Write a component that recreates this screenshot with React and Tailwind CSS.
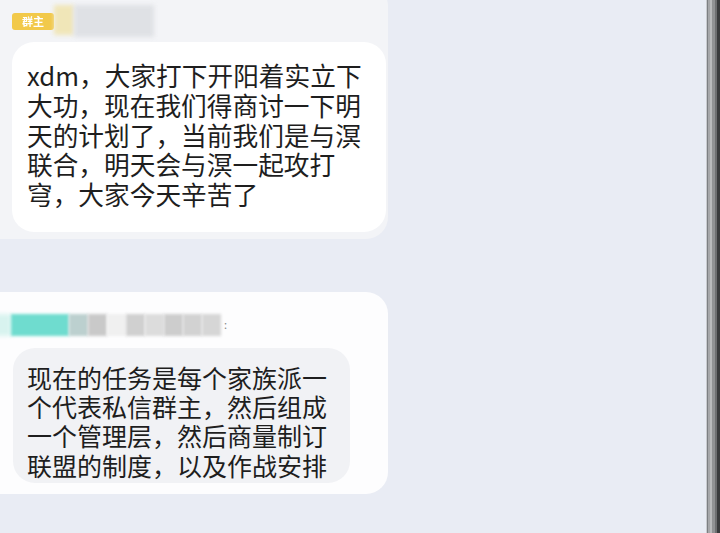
export default function App() {
  const font = { fontFamily: '"Noto Sans CJK SC", "Noto Sans", sans-serif' };
  const lines1 = [
    "xdm，大家打下开阳着实立下",
    "大功，现在我们得商讨一下明",
    "天的计划了，当前我们是与溟",
    "联合，明天会与溟一起攻打",
    "穹，大家今天辛苦了",
  ];
  const lines2 = [
    "现在的任务是每个家族派一",
    "个代表私信群主，然后组成",
    "一个管理层，然后商量制订",
    "联盟的制度，以及作战安排",
  ];
  const withBreaks = (lines) =>
    lines.map((l, i) => (
      <span key={l}>
        {l}
        {i < lines.length - 1 && <br />}
      </span>
    ));
  return (
    <div className="flex h-[533px] w-[720px] overflow-hidden bg-[#e9ecf4]" style={font}>
      <div className="flex w-[706px] flex-col">
        {/* card 1 */}
        <div className="-ml-[20px] -mt-[16px] w-[408px] rounded-[22px] bg-[#f3f4f7] pb-[7px] pl-[32px] pr-[2px] pt-[21px]">
          <div className="flex h-[37px] items-start">
            <div className="mt-[8px] flex h-[17px] w-[42px] items-center justify-center rounded-[3px] bg-[#f2c94a] text-[11px] font-bold text-white blur-[0.6px]">
              群主
            </div>
            <div className="h-[30px] w-[20px] bg-[#f0e6b8] blur-[2px]" />
            <div className="h-[32px] w-[80px] bg-[#dfe1e5] blur-[2px]" />
          </div>
          <div className="rounded-[22px] bg-white pb-[23px] pl-[15px] pt-[18px] text-[25.7px] leading-[29.75px] text-[#1e1e1e]">
            <p className="whitespace-nowrap">{withBreaks(lines1)}</p>
          </div>
        </div>

        {/* card 2 */}
        <div className="-ml-[20px] mt-[53px] w-[408px] rounded-[22px] bg-[#fdfdfe] pb-[11px] pl-[33px] pt-[21px]">
          <div className="flex h-[35px] items-start">
            <div className="mt-[1px] h-[22px] w-[18px] -ml-[20px] bg-[#d8f3ef] blur-[2px]" />
            <div className="mt-[1px] h-[22px] w-[58px] bg-[#6fdccf] blur-[1.5px]" />
            <div className="mt-[1px] h-[22px] w-[19px] bg-[#bcd0cf] blur-[1.5px]" />
            <div className="mt-[1px] h-[22px] w-[19px] bg-[#c9c9c9] blur-[1.5px]" />
            <div className="mt-[1px] h-[22px] w-[19px] bg-[#f0f0f0] blur-[1.5px]" />
            <div className="mt-[1px] h-[22px] w-[19px] bg-[#d0d0d0] blur-[1.5px]" />
            <div className="mt-[1px] h-[22px] w-[19px] bg-[#dcdcdc] blur-[1.5px]" />
            <div className="mt-[1px] h-[22px] w-[19px] bg-[#cdcdcd] blur-[1.5px]" />
            <div className="mt-[1px] h-[22px] w-[19px] bg-[#d2d2d2] blur-[1.5px]" />
            <div className="mt-[1px] h-[22px] w-[19px] bg-[#d6d6d6] blur-[1.5px]" />
            <div className="ml-[3px] mt-[3px] text-[11px] leading-[16px] text-[#888]">:</div>
          </div>
          <div className="w-[337px] rounded-[22px] bg-[#f1f2f5] pb-[3px] pl-[14px] pt-[15px] text-[25px] leading-[29.3px] text-[#1e1e1e]">
            <p className="whitespace-nowrap">{withBreaks(lines2)}</p>
          </div>
        </div>
      </div>

      {/* right window edge */}
      <div className="flex h-full w-[14px]">
        <div className="w-px bg-[#c9cbcf]" />
        <div className="w-px bg-[#7d7f82]" />
        <div className="w-[2px] bg-[#a6a7a9]" />
        <div className="w-[2px] bg-[#b9babc]" />
        <div className="w-[3px] bg-[#919294]" />
        <div className="w-[2px] bg-[#6e6f71]" />
        <div className="w-[3px] bg-[#3a3b3d]" />
      </div>
    </div>
  );
}
